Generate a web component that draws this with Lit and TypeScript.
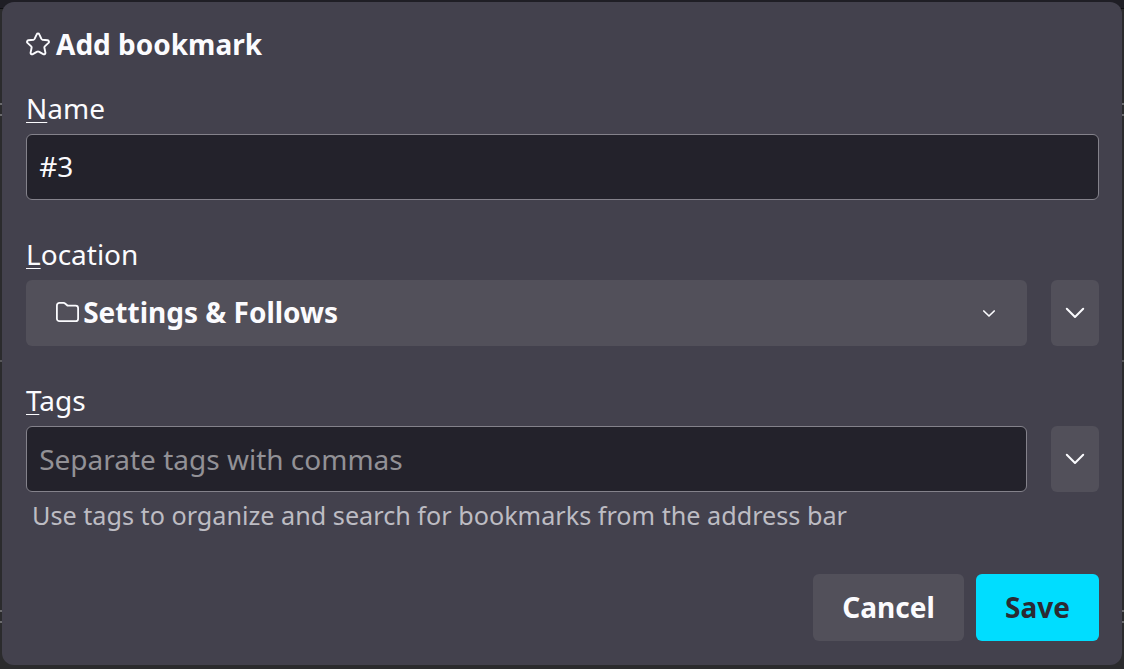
import { LitElement, css, html, svg } from "lit";
import { customElement, property } from "lit/decorators.js";

const starIcon = svg`<path d="M10.700 2.400c.5-1.200 2.100-1.200 2.600 0l2.100 4.500c.2.400.6.700 1.100.8l5.100.6c1.300.2 1.800 1.700.9 2.600l-3.700 3.500c-.4.400-.5.800-.4 1.300l1 4.900c.2 1.300-1.100 2.200-2.200 1.600l-4.400-2.500c-.5-.3-1.100-.3-1.600 0l-4.400 2.500c-1.100.6-2.400-.3-2.200-1.600l1-4.900c.1-.5 0-.9-.4-1.300l-3.700-3.500c-.9-.9-.4-2.400.9-2.600l5.100-.6c.5-.1.900-.4 1.100-.8z" />`;

const folderIcon = svg`<path d="M3.400 1.900h4.100c.6 0 1.200.2 1.600.6l1.700 1.500c.4.400 1 .6 1.600.6h7.200c1.400 0 2.500 1.100 2.500 2.500v10.600c0 1.400-1.100 2.500-2.500 2.500H3.400c-1.400 0-2.500-1.100-2.500-2.500V4.400c0-1.400 1.100-2.500 2.500-2.500z" />`;

@customElement("bm-chevron")
export class BmChevron extends LitElement {
  static styles = css`
    :host {
      display: block;
      width: 20px;
      height: 12px;
    }

    :host([small]) {
      width: 14px;
      height: 9px;
    }

    svg {
      display: block;
      width: 100%;
      height: 100%;
      fill: none;
      stroke: #fbfbfe;
      stroke-width: 2;
      stroke-linecap: round;
      stroke-linejoin: round;
    }

    :host([small]) svg {
      stroke-width: 1.7;
    }
  `;

  @property({ type: Boolean, reflect: true })
  small = false;

  render() {
    return this.small
      ? html`<svg viewBox="0 0 14 9"><path d="M1.800 2 7 7l5.200-5" /></svg>`
      : html`<svg viewBox="0 0 20 12"><path d="M1.800 1.800 10 10l8.200-8.200" /></svg>`;
  }
}

@customElement("app-root")
export class AppRoot extends LitElement {
  static styles = css`
    :host {
      display: block;
      box-sizing: border-box;
      height: 100vh;
      padding: 2px 2px 4px;
      overflow: hidden;
      color: #fbfbfe;
      font: 28px/38px "Noto Sans", sans-serif;
      background: linear-gradient(
        #1f1e25 8px,
        #0f0f12 8px 9px,
        #2b2b2d 9px 103px,
        #6b6b6e 103px 105px,
        #2b2b2d 105px 114px,
        #6b6b6e 114px 116px,
        #2b2b2d 116px 360px,
        #57575a 360px 362px,
        #2b2b2d 362px 610px,
        #6b6b6e 610px 612px,
        #2b2b2d 612px 621px,
        #6b6b6e 621px 623px,
        #2b2b2d 623px
      );
    }

    * {
      box-sizing: border-box;
    }

    .panel {
      height: 663px;
      padding: 23px 23px 24px 24px;
      border-radius: 12px;
      background: #43414d;
    }

    .title {
      display: flex;
      align-items: center;
      gap: 6px;
      height: 38px;
      margin: 0;
      font-size: 28px;
      font-weight: 700;
    }

    .icon {
      flex: none;
      width: 24px;
      height: 24px;
      fill: none;
      stroke: #fbfbfe;
      stroke-width: 1.9;
      stroke-linejoin: round;
    }

    .folder {
      stroke-width: 1.8;
    }

    .field {
      margin-top: 35px;
    }

    .title + .field {
      margin-top: 26px;
    }

    .label {
      display: block;
      height: 38px;
    }

    .key {
      text-decoration: underline;
      text-decoration-thickness: 1px;
      text-underline-offset: 3px;
      text-decoration-skip-ink: none;
    }

    .row {
      display: flex;
      gap: 24px;
      height: 66px;
      margin-top: 7px;
    }

    .input {
      flex: 1;
      min-width: 0;
      padding: 0 12px 0 12.2px;
      border: 1px solid #84828b;
      border-radius: 6px;
      outline: none;
      background: #23222b;
      color: #fbfbfe;
      font: inherit;
    }

    .name {
      padding-bottom: 2px;
    }

    .input::placeholder {
      color: #929196;
      opacity: 1;
    }

    .button {
      display: flex;
      align-items: center;
      justify-content: center;
      padding: 0;
      border: 0;
      border-radius: 6px;
      background: #52505a;
      color: #fbfbfe;
      font: inherit;
      font-weight: 700;
    }

    .caption {
      padding-bottom: 2px;
    }

    .select {
      flex: 1;
      justify-content: flex-start;
      gap: 3.2px;
      padding: 0 31px 0 30px;
    }

    .select bm-chevron {
      margin-left: auto;
    }

    .expand {
      width: 48px;
    }

    .hint {
      margin: 5px 0 0 6px;
      color: #bdbcc3;
      font-size: 25.2px;
      line-height: 36px;
    }

    .actions {
      display: flex;
      justify-content: flex-end;
      gap: 12px;
      height: 67px;
      margin-top: 41px;
    }

    .cancel {
      width: 151px;
    }

    .save {
      width: 123px;
      background: #00ddff;
      color: #2b2a33;
    }
  `;

  render() {
    return html`
      <section class="panel">
        <h1 class="title">
          <svg class="icon" viewBox="0 0 24 24">${starIcon}</svg>
          <span>Add bookmark</span>
        </h1>

        <div class="field">
          <label class="label" for="name"><span class="key">N</span>ame</label>
          <div class="row">
            <input class="input name" id="name" value="#3" />
          </div>
        </div>

        <div class="field">
          <span class="label"><span class="key">L</span>ocation</span>
          <div class="row">
            <button class="button select">
              <svg class="icon folder" viewBox="0 0 24 24">${folderIcon}</svg>
              <span class="caption">Settings &amp; Follows</span>
              <bm-chevron small></bm-chevron>
            </button>
            <button class="button expand"><bm-chevron></bm-chevron></button>
          </div>
        </div>

        <div class="field">
          <label class="label" for="tags"><span class="key">T</span>ags</label>
          <div class="row">
            <input class="input" id="tags" placeholder="Separate tags with commas" />
            <button class="button expand"><bm-chevron></bm-chevron></button>
          </div>
          <p class="hint">Use tags to organize and search for bookmarks from the address bar</p>
        </div>

        <div class="actions">
          <button class="button cancel"><span class="caption">Cancel</span></button>
          <button class="button save"><span class="caption">Save</span></button>
        </div>
      </section>
    `;
  }
}

declare global {
  interface HTMLElementTagNameMap {
    "app-root": AppRoot;
    "bm-chevron": BmChevron;
  }
}
